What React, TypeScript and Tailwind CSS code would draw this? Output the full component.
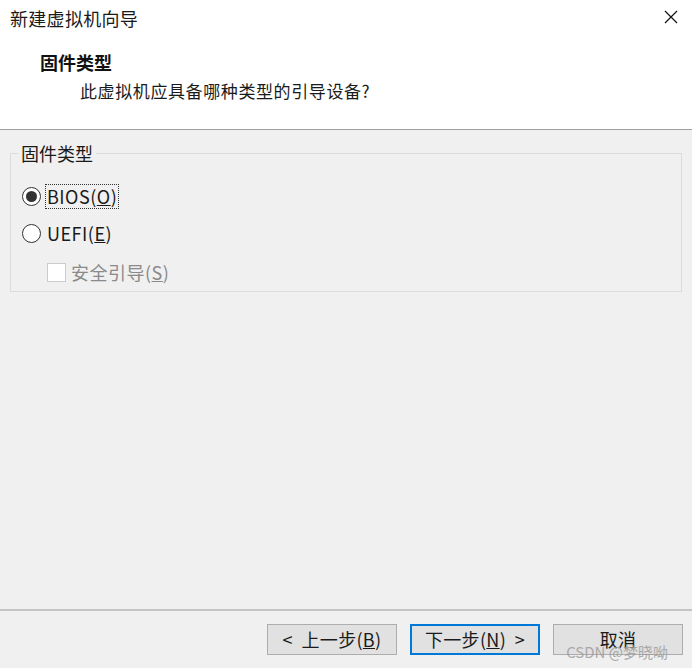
import React from "react";

const font = { fontFamily: '"Noto Sans CJK SC", "Noto Sans", sans-serif' };

function Radio({ checked }: { checked?: boolean }) {
  return (
    <span className="flex h-[19px] w-[19px] items-center justify-center rounded-full border border-[#333333] bg-white">
      {checked && <span className="h-[11px] w-[11px] rounded-full bg-[#333333]" />}
    </span>
  );
}

function Btn({ children, focused }: { children: React.ReactNode; focused?: boolean }) {
  return (
    <button
      className={
        "flex h-[31px] w-[130px] items-center justify-center bg-[#e1e1e1] text-[18px] tracking-[0.3px] text-[#1a1a1a] " +
        (focused ? "border-2 border-[#0078d7]" : "border border-[#adadad]")
      }
    >
      {children}
    </button>
  );
}

export default function App() {
  return (
    <div className="relative flex h-[668px] w-[692px] flex-col bg-[#f0f0f0]" style={font}>
      {/* header */}
      <div className="h-[130px] border-b border-[#a0a0a0] bg-white">
        <div className="flex h-[36px] items-center justify-between pl-[10px] pr-[14px]">
          <span className="text-[18px] leading-[24px] tracking-[0.3px] text-[#1a1a1a]">新建虚拟机向导</span>
          <svg width="14" height="14" viewBox="0 0 14 14" className="mt-[-2px]">
            <path d="M1 1L13 13M13 1L1 13" stroke="#111" strokeWidth="1.2" />
          </svg>
        </div>
        <div className="mt-[14px] pl-[40px] text-[18px] font-bold leading-[24px] text-[#111]">固件类型</div>
        <div className="mt-[5px] pl-[80px] text-[17px] leading-[24px] tracking-[0.6px] text-[#1a1a1a]">
          此虚拟机应具备哪种类型的引导设备?
        </div>
      </div>

      {/* body */}
      <div className="flex-1 px-[10px] pt-[11px]">
        <fieldset className="border border-[#dcdcdc] pb-[6px] pl-[11px]">
          <legend className="ml-[-4px] px-[3px] text-[18px] leading-[24px] text-[#1a1a1a]">固件类型</legend>
          <div className="mt-[18px] flex h-[26px] items-center gap-[4px]">
            <Radio checked />
            <span className="border border-dotted border-[#333] px-[1px] text-[18px] leading-[23px] tracking-[0.5px] text-[#1a1a1a]">
              BIOS(<span className="underline">O</span>)
            </span>
          </div>
          <div className="mt-[11px] flex h-[26px] items-center gap-[4px]">
            <Radio />
            <span className="px-[2px] text-[18px] leading-[23px] tracking-[0.5px] text-[#1a1a1a]">
              UEFI(<span className="underline">E</span>)
            </span>
          </div>
          <div className="mt-[13px] flex h-[26px] items-center gap-[5px] pl-[25px]">
            <span className="h-[19px] w-[19px] border border-[#cccccc] bg-white" />
            <span className="text-[18px] leading-[23px] tracking-[0.5px] text-[#8a8a8a]">
              安全引导(<span className="underline">S</span>)
            </span>
          </div>
        </fieldset>
      </div>

      {/* footer */}
      <div className="border-t-2 border-[#c4c4c4] pb-[13px] pt-[13px]">
        <div className="flex justify-end gap-[13px] pr-[9px]">
          <Btn>
            &lt;&nbsp; 上一步(<span className="underline">B</span>)
          </Btn>
          <Btn focused>
            下一步(<span className="underline">N</span>)&nbsp; &gt;
          </Btn>
          <Btn>取消</Btn>
        </div>
      </div>

      <div className="absolute bottom-[6px] right-[24px] text-[15px] leading-[20px] text-[#9a9a9a] opacity-80">
        CSDN @梦晓呦
      </div>
    </div>
  );
}
